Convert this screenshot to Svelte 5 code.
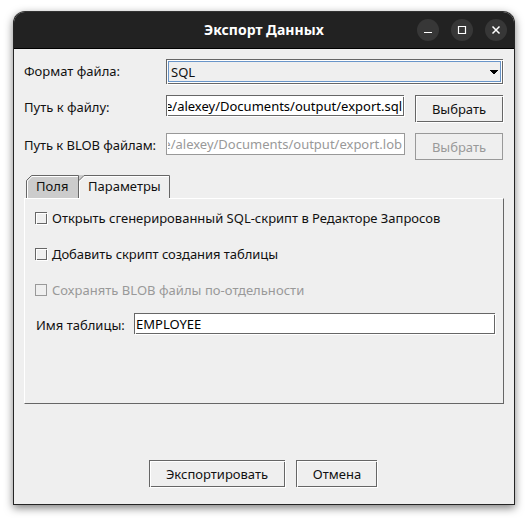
<script>
  const options = [
    { label: 'Открыть сгенерированный SQL-скрипт в Редакторе Запросов', fit: -0.01, disabled: false },
    { label: 'Добавить скрипт создания таблицы', fit: -0.05, disabled: false },
    { label: 'Сохранять BLOB файлы по-отдельности', fit: 0.03, disabled: true }
  ];
</script>

<div class="desktop">
  <div class="window">
    <header>
      <h1>Экспорт Данных</h1>
      <div class="controls">
        <svg viewBox="0 0 22 22"><path d="M7 13.5h8" /></svg>
        <svg viewBox="0 0 22 22"><path d="M7.5 7.5h7v7h-7z" /></svg>
        <svg viewBox="0 0 22 22"><path d="M7.5 7.5l7 7M14.5 7.5l-7 7" stroke-width="1.5" /></svg>
      </div>
    </header>
    <main>
      <div class="row format">
        <span class="label">Формат файла:</span>
        <div class="combo bevel"><div class="value"><span>SQL</span>
          <svg width="8" height="4" viewBox="0 0 8 4" shape-rendering="crispEdges"><path d="M0 0h8v1h-1v1h-1v1h-1v1h-2v-1h-1v-1h-1v-1h-1z" fill="#000" /></svg>
        </div></div>
      </div>
      <div class="row path">
        <span class="label">Путь к файлу:</span>
        <div class="field bevel"><div class="clip"><span>e/alexey/Documents/output/export.sql</span></div></div>
        <div class="button bevel">Выбрать</div>
      </div>
      <div class="row blob">
        <span class="label">Путь к BLOB файлам:</span>
        <div class="field off"><div class="clip"><span>e/alexey/Documents/output/export.lob</span></div></div>
        <div class="button off">Выбрать</div>
      </div>
      <div class="tabs">
        <div class="tab idle">
          <svg width="54" height="23" viewBox="0 0 54 23"><path d="M.5 23V5.5l5-5H53.5V23z" fill="#ccc" /><path d="M.5 23V5.5l5-5H52.5V23" fill="none" stroke="#666" /><path d="M1.5 23V6L6 1.5H52" fill="none" stroke="#fff" /></svg>
          <span>Поля</span>
        </div>
        <div class="tab active">
          <svg width="91" height="24" viewBox="0 0 91 24"><path d="M0 24V5.5L5.5 1H90v23z" fill="#efefef" /><path d="M0 0H5L0 5z" fill="#ccc" /><path d="M0 5.5l5-5H90.5V23" fill="none" stroke="#666" /><path d="M.5 24V6.5L6 1.5H90" fill="none" stroke="#fff" /></svg>
          <span>Параметры</span>
        </div>
      </div>
      <section>
        {#each options as o}
          <div class="check" class:disabled={o.disabled}>
            <i class:bevel={!o.disabled}></i><span style:letter-spacing={`${o.fit}px`}>{o.label}</span>
          </div>
        {/each}
        <div class="name">
          <span class="namelabel">Имя таблицы:</span>
          <div class="field bevel"><span>EMPLOYEE</span></div>
        </div>
      </section>
      <footer>
        <div class="button bevel export">Экспортировать</div>
        <div class="button bevel cancel">Отмена</div>
      </footer>
    </main>
  </div>
</div>

<style>
  :global(body) { background: #fff; overflow: hidden; }
  .desktop { width: 528px; height: 521px; padding: 11px 13px 0; box-sizing: border-box; overflow: hidden;
    font: 13px/18px "Noto Sans", sans-serif; color: #111; white-space: nowrap; }
  .desktop * { box-sizing: border-box; }
  .window { width: 502px; height: 494px; border: 1px solid #252525; border-top-color: #333; border-radius: 12px 12px 0 0; background: #efefef;
    box-shadow: 0 3px 9px 0 rgba(0,0,0,.5); }
  header { height: 37px; background: #222; border-bottom: 1px solid #000; border-radius: 11px 11px 0 0; display: flex; align-items: center; padding: 0 7px 0 190px; justify-content: space-between; }
  h1 { margin: 0; font: bold 14px/20px "Noto Sans", sans-serif; color: #fff; }
  .controls { display: flex; gap: 12px; }
  .controls svg { width: 22px; height: 22px; border-radius: 50%; background: #373737; fill: none; stroke: #fff; stroke-width: 1.2; }
  main { padding: 10px 11px 0 10px; }
  .row { display: flex; align-items: flex-start; }
  .format { height: 36px; }
  .path { height: 38px; }
  .blob { height: 42px; }
  .label { width: 142px; padding-top: 3px; flex: none; }
  .blob .label { letter-spacing: -.06px; }
  .bevel { position: relative; border: 1px solid #666; box-shadow: 1px 1px 0 #fff, inset 1px 1px 0 #fff; }
  .bevel::before, .bevel::after { content: ""; position: absolute; width: 1px; height: 1px; background: #efefef; }
  .bevel::before { right: -1px; top: 0; }
  .bevel::after { left: 0; bottom: -1px; }
  .combo { width: 337px; height: 25px; padding: 1px; box-shadow: 1px 1px 0 #fff, inset 0 0 0 1px #fff; }
  .value { height: 21px; border: 1px solid #6995c9; display: flex; align-items: center; justify-content: space-between; padding: 0 2px; }
  .field { width: 238px; height: 21px; background-color: #fff; color: #000; padding-left: 1px; }
  .clip { display: flex; justify-content: flex-end; width: 234px; overflow: hidden; height: 20px; line-height: 20px; }
  .field.off { width: 239px; height: 22px; border: 1px solid #999; color: #999; }
  .button { width: 88px; height: 27px; margin-left: 11px; text-align: center; line-height: 26px; flex: none; }
  .button.off { border: 1px solid #999; color: #999; margin-left: 10px; }
  .tabs { display: flex; height: 23px; padding-left: 2px; position: relative; z-index: 1; }
  .tab { position: relative; height: 23px; }
  .tab svg { position: absolute; left: 0; top: 0; }
  .tab span { position: relative; display: block; line-height: 23px; }
  .idle { width: 53px; padding-left: 10px; }
  .active { width: 91px; padding-left: 9px; }
  section { height: 206px; width: 480px; border: 1px solid; border-color: #fff #666 #666 #fff; padding: 10px 0 0 10px; }
  .check { display: flex; height: 36px; gap: 5px; }
  .check i { width: 12px; height: 12px; margin-top: 3px; flex: none; }
  .disabled { color: #999; }
  .disabled i { border: 1px solid #999; }
  .name { display: flex; margin-top: -4px; }
  .name .field { width: 361px; line-height: 20px; }
  .namelabel { width: 99px; padding: 3px 0 0 1px; }
  footer { display: flex; margin: 56px 0 0 125px; gap: 11px; }
  footer .button { margin: 0; }
  .export { width: 136px; }
  .cancel { width: 81px; padding-left: 1px; }
</style>
